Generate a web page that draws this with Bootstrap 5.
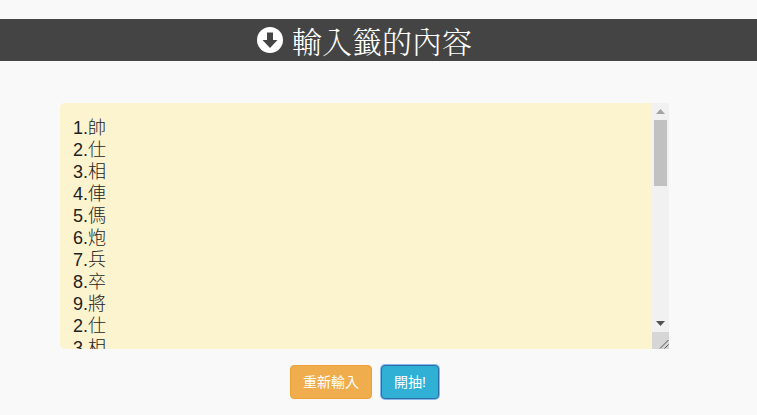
<!DOCTYPE html>
<html lang="zh-Hant">
<head>
<meta charset="utf-8">
<title>輸入籤的內容</title>
<link href="https://cdn.jsdelivr.net/npm/bootstrap@5.3.0/dist/css/bootstrap.min.css" rel="stylesheet">
<style>
html,body{height:100%;overflow:hidden}
body{background:#f9f9f9;font-family:"Liberation Sans","Noto Sans CJK TC",sans-serif;padding-top:19px}
.title-bar{background:#444;color:#fff;height:42px;gap:9px;font-size:30px;font-weight:300;padding:0 28px 0 0}
.title-bar svg{width:26px;height:26px;flex:none}
.title-text{font-family:"Noto Serif CJK TC","Liberation Serif","Noto Sans CJK TC",serif;font-weight:300;line-height:30px;height:30px;margin-top:-1px}
.entry-wrap{padding:42px 88px 0 60px}
.entry-frame{height:246px}
.entry-box{flex:1 1 0;min-width:0;height:100%;background:#fcf3cf;border:0;border-radius:5px 0 0 5px;padding:14px 13px 0;font-size:18px;font-weight:300;line-height:22px;color:#222;resize:none;outline:0;box-shadow:none}
.entry-box:focus{background:#fcf3cf;box-shadow:none;color:#222}
.fake-scroll{width:17px;flex:none;background:#f1f1f1}
.fake-btn{height:17px;flex:none}
.fake-btn svg{width:9px;height:5px;display:block}
.fake-thumb{height:66px;margin:0 2px;background:#c1c1c1;flex:none}
.fake-track{flex:1 1 0}
.fake-corner{height:17px;flex:none;background:#d6d6d6}
.fake-corner svg{width:17px;height:17px;display:block}
.action-row{gap:9px;padding:16px 28px 0 0}
.btn-reset,.btn-draw{height:34px;font-size:14px;line-height:20px;color:#fff;padding:6px 0;border-radius:4px}
.btn-reset{width:82px;background:#f0ad4e;border:1px solid #eea236}
.btn-draw{width:58px;background:#31b0d5;border:1px solid #2e6da4;box-shadow:0 0 0 1px #8ab8ee}
</style>
</head>
<body>
<div class="title-bar d-flex justify-content-center align-items-center">
  <svg viewBox="0 0 26 26" aria-hidden="true"><circle cx="13" cy="13" r="13" fill="#fff"/><path d="M10 5.500h6v7.500h4.500L13 21 5.500 13H10z" fill="#444"/></svg>
  <span class="title-text">輸入籤的內容</span>
</div>
<div class="entry-wrap">
<div class="entry-frame d-flex">
<textarea class="form-control entry-box" spellcheck="false">1.帥
2.仕
3.相
4.俥
5.傌
6.炮
7.兵
8.卒
9.將
2.仕
3.相
4.俥
5.傌
6.炮
7.兵
8.卒
9.將</textarea>
<div class="fake-scroll d-flex flex-column" aria-hidden="true">
  <div class="fake-btn d-flex justify-content-center align-items-center"><svg viewBox="0 0 9 5"><path d="M4.500 0L9 5H0z" fill="#a3a3a3"/></svg></div>
  <div class="fake-thumb"></div>
  <div class="fake-track"></div>
  <div class="fake-btn d-flex justify-content-center align-items-center"><svg viewBox="0 0 9 5"><path d="M4.500 5L9 0H0z" fill="#505050"/></svg></div>
  <div class="fake-corner"><svg viewBox="0 0 17 17"><path d="M8 16.500L16.500 8M12.500 16.500L16.500 12.500" stroke="#505050" fill="none"/></svg></div>
</div>
</div>
</div>
<div class="action-row d-flex justify-content-center">
  <button type="button" class="btn btn-reset">重新輸入</button>
  <button type="button" class="btn btn-draw">開抽!</button>
</div>
<script src="https://cdn.jsdelivr.net/npm/bootstrap@5.3.0/dist/js/bootstrap.bundle.min.js"></script>
</body>
</html>
